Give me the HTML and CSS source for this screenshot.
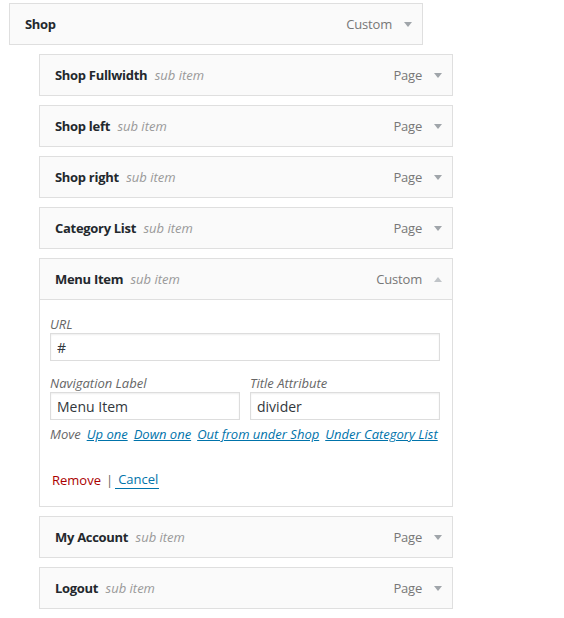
FILE: index.html
```html
<!DOCTYPE html>
<html>
<head>
<meta charset="utf-8">
<link rel="stylesheet" href="styles.css">
</head>
<body>
<div class="menu">
  <div class="item">
    <div class="bar">
      <span class="title"><span class="name">Shop</span></span>
      <span class="controls"><span class="type">Custom</span><span class="arrow down"></span></span>
    </div>
  </div>
  <div class="item sub">
    <div class="bar">
      <span class="title"><span class="name">Shop Fullwidth</span> <span class="is-sub">sub item</span></span>
      <span class="controls"><span class="type">Page</span><span class="arrow down"></span></span>
    </div>
  </div>
  <div class="item sub">
    <div class="bar">
      <span class="title"><span class="name">Shop left</span> <span class="is-sub">sub item</span></span>
      <span class="controls"><span class="type">Page</span><span class="arrow down"></span></span>
    </div>
  </div>
  <div class="item sub">
    <div class="bar">
      <span class="title"><span class="name">Shop right</span> <span class="is-sub">sub item</span></span>
      <span class="controls"><span class="type">Page</span><span class="arrow down"></span></span>
    </div>
  </div>
  <div class="item sub">
    <div class="bar">
      <span class="title"><span class="name">Category List</span> <span class="is-sub">sub item</span></span>
      <span class="controls"><span class="type">Page</span><span class="arrow down"></span></span>
    </div>
  </div>
  <div class="item sub open">
    <div class="bar">
      <span class="title"><span class="name">Menu Item</span> <span class="is-sub">sub item</span></span>
      <span class="controls"><span class="type">Custom</span><span class="arrow up"></span></span>
    </div>
    <div class="settings">
      <div class="field">
        <label class="label">URL</label>
        <input class="input" type="text" value="#">
      </div>
      <div class="row">
        <div class="field half">
          <label class="label">Navigation Label</label>
          <input class="input" type="text" value="Menu Item">
        </div>
        <div class="field half">
          <label class="label">Title Attribute</label>
          <input class="input" type="text" value="divider">
        </div>
      </div>
      <div class="move">
        <span class="move-label">Move</span>
        <a class="move-link" href="#">Up one</a>
        <a class="move-link" href="#">Down one</a>
        <a class="move-link" href="#">Out from under Shop</a>
        <a class="move-link" href="#">Under Category List</a>
      </div>
      <div class="actions">
        <a class="remove" href="#">Remove</a>
        <span class="sep">|</span>
        <a class="cancel" href="#">Cancel</a>
      </div>
    </div>
  </div>
  <div class="item sub">
    <div class="bar">
      <span class="title"><span class="name">My Account</span> <span class="is-sub">sub item</span></span>
      <span class="controls"><span class="type">Page</span><span class="arrow down"></span></span>
    </div>
  </div>
  <div class="item sub">
    <div class="bar">
      <span class="title"><span class="name">Logout</span> <span class="is-sub">sub item</span></span>
      <span class="controls"><span class="type">Page</span><span class="arrow down"></span></span>
    </div>
  </div>
</div>
</body>
</html>
```

FILE: styles.css
```css
* { box-sizing: border-box; }
html, body { margin: 0; padding: 0; background: #fff; }
body {
  font-family: "Open Sans", "Noto Sans", sans-serif;
  font-size: 13px;
  color: #23282d;
}
.menu {
  display: flex;
  flex-direction: column;
  gap: 9px;
  padding: 3px 0 0 9px;
}
.item { width: 414px; }
.item.sub { margin-left: 30px; }
.bar {
  height: 42px;
  border: 1px solid #dfdfdf;
  background: #fafafa;
  display: flex;
  align-items: center;
  justify-content: space-between;
  padding: 0 10px 0 15px;
  line-height: 20px;
}
.name { font-weight: 700; color: #23282d; letter-spacing: -0.3px; }
.is-sub { font-style: italic; color: #999; margin-left: 4px; }
.controls { display: flex; align-items: center; gap: 12px; color: #777; }
.type { letter-spacing: -0.2px; }
.arrow { width: 0; height: 0; border-left: 4px solid transparent; border-right: 4px solid transparent; }
.arrow.down { border-top: 5px solid #a0a5aa; margin-top: 1px; }
.arrow.up { border-bottom: 5px solid #c0c4c8; }
.settings {
  border: 1px solid #dfdfdf;
  border-top: 0;
  background: #fff;
  padding: 15px 10px 17px 10px;
}
.field { display: flex; flex-direction: column; }
.label {
  font-style: italic;
  color: #666;
  line-height: 18px;
  font-size: 13px;
}
.input {
  width: 390px;
  height: 28px;
  border: 1px solid #ddd;
  box-shadow: inset 0 1px 2px rgba(0,0,0,.07);
  padding: 0 6px;
  font-family: "Open Sans", "Noto Sans", sans-serif;
  font-size: 14px;
  color: #32373c;
  background: #fff;
  margin: 0;
  outline: none;
}
.row { display: flex; gap: 10px; margin-top: 13px; }
.half .input { width: 190px; }
.move {
  display: flex;
  gap: 6px;
  margin-top: 5px;
  line-height: 18px;
  font-style: italic;
}
.move-label { color: #666; }
.move-link { color: #0073aa; text-decoration: underline; }
.actions {
  margin-top: 28px;
  line-height: 18px;
  display: flex;
  align-items: center;
  padding-left: 2px;
}
.remove { color: #a00; text-decoration: none; }
.sep { color: #666; margin: 0 2px 0 5px; }
.cancel {
  color: #0073aa;
  text-decoration: none;
  border-bottom: 1px solid #0073aa;
  padding: 0 1px 0 3px;
  line-height: 17px;
}
```
